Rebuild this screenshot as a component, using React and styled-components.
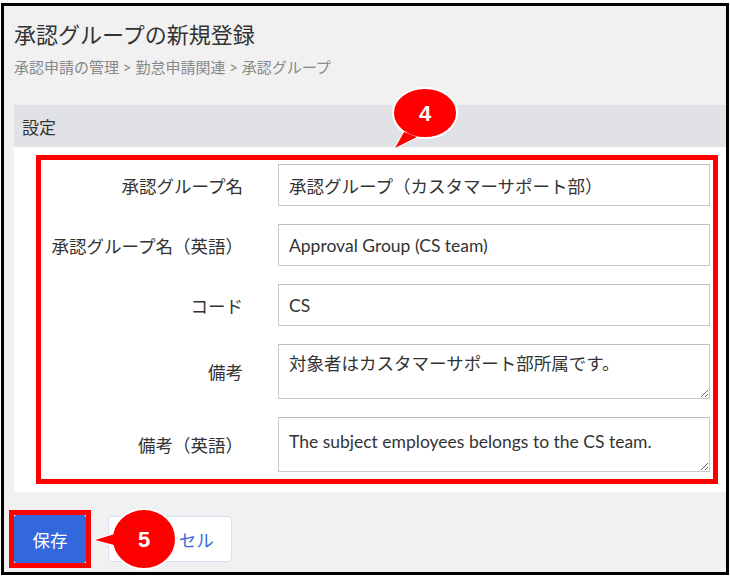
import React from "react";
import styled, { createGlobalStyle } from "styled-components";

const GlobalStyle = createGlobalStyle`
  body {
    margin: 0;
    background: #fff;
    font-family: "Lato", "Noto Sans CJK JP", sans-serif;
  }
`;

const fields = [
  { label: "承認グループ名", value: "承認グループ（カスタマーサポート部）" },
  { label: "承認グループ名（英語）", value: "Approval Group (CS team)" },
  { label: "コード", value: "CS" },
  { label: "備考", value: "対象者はカスタマーサポート部所属です。", multi: true },
  {
    label: "備考（英語）",
    value: "The subject employees belongs to the CS team.",
    multi: true,
    pad: 14,
  },
];

function Callout({ number, left, top, width, height, cx, cy, rx, ry, tail }) {
  const tailPoints = tail.map((p) => p.join(",")).join(" ");
  return (
    <Bubble style={{ left, top }} width={width} height={height}>
      <polygon points={tailPoints} fill="#f00" stroke="#fff" strokeWidth="2" />
      <ellipse cx={cx} cy={cy} rx={rx} ry={ry} fill="#f00" stroke="#fff" strokeWidth="2" />
      <polygon points={tailPoints} fill="#f00" />
      <text
        x={cx}
        y={cy + 8}
        textAnchor="middle"
        fontFamily="Liberation Sans, Arial, sans-serif"
        fontWeight="bold"
        fontSize="22"
        fill="#fff"
      >
        {number}
      </text>
    </Bubble>
  );
}

export default function App() {
  return (
    <>
      <GlobalStyle />
      <Frame>
        <Title>承認グループの新規登録</Title>
        <Breadcrumb>承認申請の管理 &gt; 勤怠申請関連 &gt; 承認グループ</Breadcrumb>
        <Panel>
          <PanelHeader>設定</PanelHeader>
          <PanelBody>
            <Highlight>
              {fields.map((f) => (
                <React.Fragment key={f.label}>
                  <Label>{f.label}</Label>
                  {f.multi ? (
                    <TextArea defaultValue={f.value} $padTop={f.pad || 9} />
                  ) : (
                    <Input defaultValue={f.value} />
                  )}
                </React.Fragment>
              ))}
            </Highlight>
          </PanelBody>
        </Panel>
        <Actions>
          <SaveMark>
            <SaveButton>保存</SaveButton>
          </SaveMark>
          <CancelButton>キャンセル</CancelButton>
        </Actions>
        <Callout
          number="4"
          left={381}
          top={76}
          width={80}
          height={72}
          cx={40}
          cy={31}
          rx={32}
          ry={25}
          tail={[[19, 50], [32, 55], [10, 66]]}
        />
        <Callout
          number="5"
          left={86}
          top={496}
          width={90}
          height={74}
          cx={54}
          cy={37}
          rx={32}
          ry={30}
          tail={[[28, 31], [28, 44], [5, 38]]}
        />
      </Frame>
    </>
  );
}

const Frame = styled.div`
  position: relative;
  box-sizing: border-box;
  margin: 3px 0 0 1px;
  width: 728px;
  height: 572px;
  border: 3px solid #000;
  background: #f1f1f1;
  padding: 0 0 0 10px;
`;

const Title = styled.h1`
  margin: 14px 0 0;
  font-size: 22px;
  line-height: 30px;
  font-weight: normal;
  color: #333;
`;

const Breadcrumb = styled.div`
  margin-top: 7px;
  font-size: 15px;
  line-height: 20px;
  color: #888;
`;

const Panel = styled.section`
  margin-top: 28px;
`;

const PanelHeader = styled.div`
  height: 42px;
  display: flex;
  align-items: center;
  padding-left: 8px;
  background: #e1e2e5;
  font-size: 17px;
  color: #333;
`;

const PanelBody = styled.div`
  background: #fff;
  padding: 8px 8px 8px 22px;
`;

const Highlight = styled.div`
  border: 5px solid #f00;
  padding: 4px 3px 7px 0;
  display: grid;
  grid-template-columns: 202px 1fr;
  column-gap: 35px;
  row-gap: 18px;
  align-items: center;
`;

const Label = styled.label`
  text-align: right;
  font-size: 17.5px;
  color: #333;
`;

const fieldBase = `
  box-sizing: border-box;
  width: 100%;
  margin: 0;
  border: 1px solid #c4cbd2;
  border-top-color: #b6bec6;
  background: #fff;
  font-family: "Lato", "Noto Sans CJK JP", sans-serif;
  font-size: 17.5px;
  color: #333;
  outline: none;
`;

const Input = styled.input`
  ${fieldBase}
  height: 42px;
  padding: 0 10px;
`;

const TextArea = styled.textarea`
  ${fieldBase}
  display: block;
  height: 55px;
  padding: ${(p) => p.$padTop}px 10px 0;
  line-height: 20px;
`;

const Actions = styled.div`
  margin-top: 18px;
  margin-left: -5px;
  display: flex;
  align-items: center;
  gap: 17px;
`;

const SaveMark = styled.div`
  display: flex;
  border: 5px solid #f00;
`;

const SaveButton = styled.button`
  width: 72px;
  height: 48px;
  border: none;
  border-radius: 3px;
  background: #3367dc;
  color: #fff;
  font-family: "Lato", "Noto Sans CJK JP", sans-serif;
  font-size: 17.5px;
`;

const CancelButton = styled.button`
  width: 124px;
  height: 46px;
  border: 1px solid #d6e0f0;
  border-radius: 4px;
  background: #fff;
  color: #3a6ad8;
  font-family: "Lato", "Noto Sans CJK JP", sans-serif;
  font-size: 17.5px;
`;

const Bubble = styled.svg`
  position: absolute;
  overflow: visible;
`;
